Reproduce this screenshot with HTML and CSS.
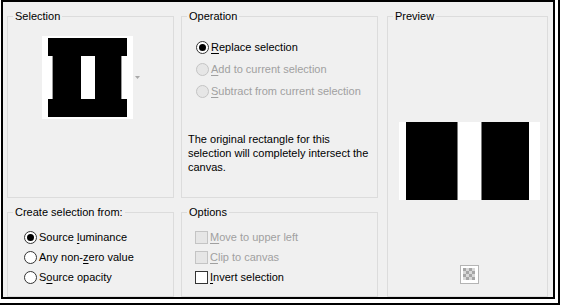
FILE: index.html
```html
<!DOCTYPE html>
<html lang="en">
<head>
  <meta charset="UTF-8" />
  <title>Selection from mask</title>
  <link rel="stylesheet" href="styles.css">
</head>
<body>
  <div class="shell">
    <div class="dialog">

      <fieldset class="group group-selection">
        <legend>Selection</legend>
        <div class="thumb-row">
          <div class="thumb">
            <svg width="91" height="83" viewBox="0 0 91 83">
              <rect x="6" y="2" width="79" height="18" fill="#000"/>
              <rect x="6" y="63" width="79" height="18" fill="#000"/>
              <rect x="11" y="20" width="28" height="43" fill="#000"/>
              <rect x="53" y="20" width="26" height="43" fill="#000"/>
              <rect x="10" y="20" width="1" height="43" fill="#9a9a9a"/>
              <rect x="79" y="20" width="1" height="43" fill="#9a9a9a"/>
            </svg>
          </div>
          <svg class="drop" width="5" height="3" viewBox="0 0 5 3"><path d="M0 0h5L2.5 3z" fill="#a8a8a8"/></svg>
        </div>
      </fieldset>

      <fieldset class="group group-operation">
        <legend>Operation</legend>
        <div class="choices">
          <label class="choice"><input type="radio" name="op" checked><span><u>R</u>eplace selection</span></label>
          <label class="choice disabled"><input type="radio" name="op" disabled><span><u>A</u>dd to current selection</span></label>
          <label class="choice disabled"><input type="radio" name="op" disabled><span><u>S</u>ubtract from current selection</span></label>
        </div>
        <p class="note">The original rectangle for this<br>selection will completely intersect the<br>canvas.</p>
      </fieldset>

      <fieldset class="group group-preview">
        <legend>Preview</legend>
        <div class="preview-body">
          <div class="preview-img">
            <span class="bar bar-a"></span>
            <span class="gap gap-a"></span>
            <span class="bar bar-b"></span>
            <span class="gap gap-b"></span>
          </div>
          <svg class="checker" width="19" height="19" viewBox="0 0 19 19">
            <rect x="0.5" y="0.5" width="18" height="18" fill="#fff" stroke="#b4b4b4"/>
            <g fill="#a6a6a6">
              <rect x="3" y="3" width="3" height="3"/><rect x="9" y="3" width="3" height="3"/>
              <rect x="6" y="6" width="3" height="3"/><rect x="12" y="6" width="3" height="3"/>
              <rect x="3" y="9" width="3" height="3"/><rect x="9" y="9" width="3" height="3"/>
              <rect x="6" y="12" width="3" height="3"/><rect x="12" y="12" width="3" height="3"/>
            </g>
            <g fill="#d8d8d8">
              <rect x="6" y="3" width="3" height="3"/><rect x="12" y="3" width="3" height="3"/>
              <rect x="3" y="6" width="3" height="3"/><rect x="9" y="6" width="3" height="3"/>
              <rect x="6" y="9" width="3" height="3"/><rect x="12" y="9" width="3" height="3"/>
              <rect x="3" y="12" width="3" height="3"/><rect x="9" y="12" width="3" height="3"/>
            </g>
          </svg>
        </div>
      </fieldset>

      <fieldset class="group group-source">
        <legend>Create selection from:</legend>
        <div class="choices">
          <label class="choice"><input type="radio" name="src" checked><span>Source <u>l</u>uminance</span></label>
          <label class="choice"><input type="radio" name="src"><span>Any non-<u>z</u>ero value</span></label>
          <label class="choice"><input type="radio" name="src"><span>S<u>o</u>urce opacity</span></label>
        </div>
      </fieldset>

      <fieldset class="group group-options">
        <legend>Options</legend>
        <div class="choices">
          <label class="choice disabled"><input type="checkbox" disabled><span><u>M</u>ove to upper left</span></label>
          <label class="choice disabled"><input type="checkbox" disabled><span><u>C</u>lip to canvas</span></label>
          <label class="choice"><input type="checkbox"><span><u>I</u>nvert selection</span></label>
        </div>
      </fieldset>

    </div>
  </div>
</body>
</html>
```

FILE: styles.css
```css
* {
  box-sizing: border-box;
}
body {
  margin: 0;
  background: #fff;
  font-family: "Liberation Sans", Arial, sans-serif;
  font-size: 11px;
  color: #000;
}
.shell {
  width: 560px;
  height: 305px;
  padding-right: 3px;
  padding-bottom: 3px;
  border-right: 2px solid #000;
  border-bottom: 2px solid #000;
}
.dialog {
  margin-left: 1px;
  width: 554px;
  height: 299px;
  border: 2px solid #000;
  background: #f0f0f0;
  display: grid;
  grid-template-columns: 167px 197px 163px;
  grid-template-rows: 189px 92px;
  column-gap: 7px;
  row-gap: 7px;
  padding: 7px 0 0 4px;
}

/* group boxes */
.group {
  margin: 0;
  padding: 0;
  min-width: 0;
  border: 1px solid #dcdcdc;
}
.group legend {
  margin-left: 5px;
  padding: 0 2px;
  line-height: 15px;
}
.group-preview {
  grid-column: 3;
  grid-row: 1 / span 2;
  margin-left: 2px;
}

/* selection thumbnail */
.thumb-row {
  display: flex;
  align-items: center;
  margin: 12px 0 0 34px;
}
.thumb {
  width: 91px;
  height: 83px;
  background: #fff;
}
.thumb svg {
  display: block;
}
.drop {
  margin-left: 2px;
}

/* radios and checkboxes */
.choices {
  display: flex;
  flex-direction: column;
}
.choice {
  display: flex;
  align-items: center;
  height: 22px;
  white-space: nowrap;
}
.choice input {
  appearance: none;
  margin: 0 2px 0 0;
  width: 13px;
  height: 13px;
  border: 1px solid #333;
  background: #fff;
  flex: none;
}
.choice input[type="radio"] {
  border-radius: 50%;
  display: grid;
  place-items: center;
}
.choice input[type="radio"]:checked::after {
  content: "";
  width: 7px;
  height: 7px;
  border-radius: 50%;
  background: #000;
}
.choice.disabled {
  color: #a0a0a0;
}
.choice.disabled input {
  border-color: #c4c4c4;
  background: #e6e6e6;
}
.choice u {
  text-underline-offset: 2px;
}

.group-operation .choices {
  padding: 12px 0 0 14px;
}
.note {
  margin: 30px 0 0 6px;
  line-height: 14px;
  white-space: nowrap;
}
.group-source .choices {
  padding: 7px 0 0 16px;
}
.group-options .choices {
  padding: 7px 0 0 13px;
}
.group-source .choice,
.group-options .choice {
  height: 20px;
}

/* preview */
.preview-body {
  display: flex;
  flex-direction: column;
  align-items: center;
  padding-left: 4px;
}
.preview-img {
  display: flex;
  margin-top: 98px;
  width: 141px;
  height: 78px;
  padding-left: 7px;
  background: #fff;
}
.bar {
  background: #000;
}
.bar-a {
  width: 52px;
  border-right: 1px solid #7a7a7a;
}
.gap-a {
  width: 23px;
}
.bar-b {
  width: 48px;
  border-left: 1px solid #7a7a7a;
}
.checker {
  margin-top: 65px;
}
```
